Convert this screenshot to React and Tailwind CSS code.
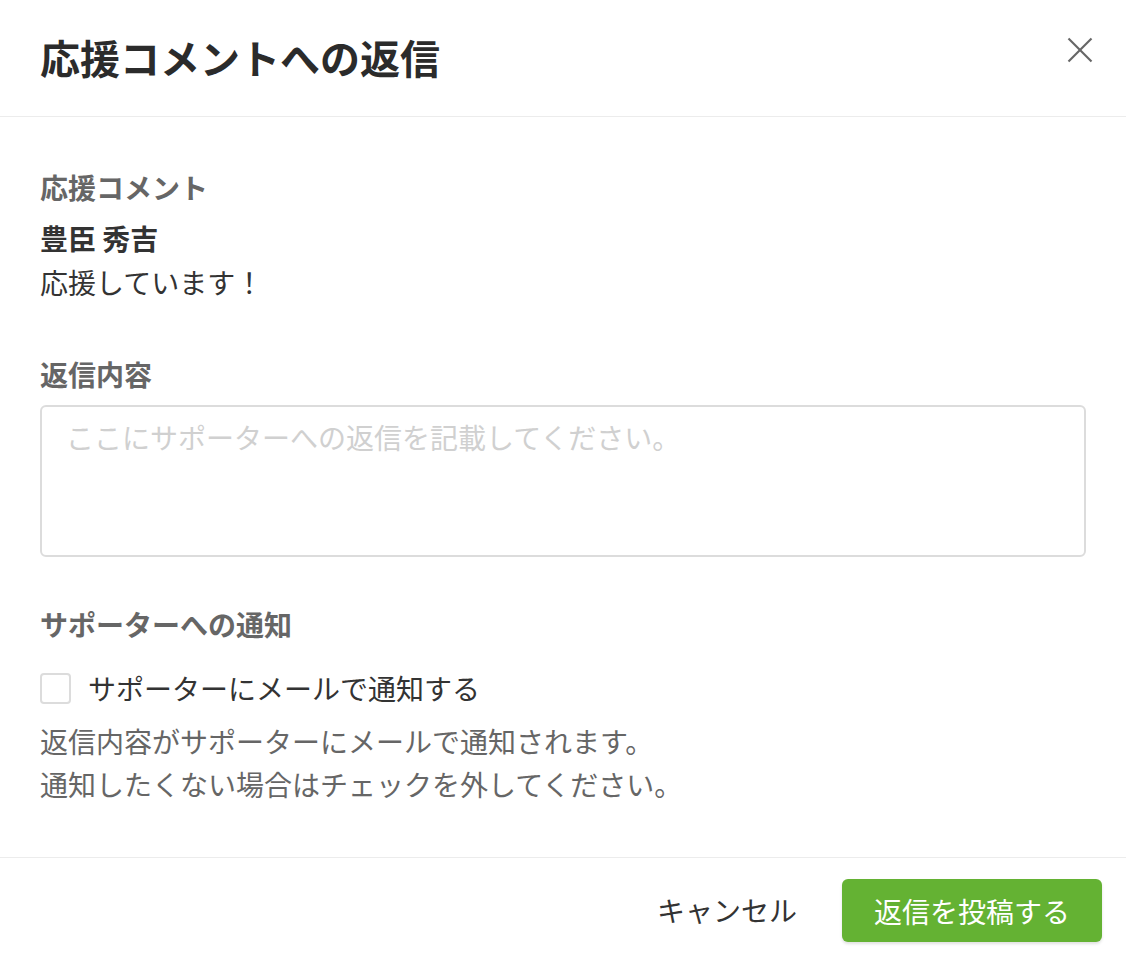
export default function App() {
  return (
    <div className="min-h-screen bg-white font-['Noto_Sans_CJK_JP','Noto_Sans',sans-serif] text-[#333]">
      {/* Header */}
      <div className="flex justify-between border-b border-[#ececec] pl-10 pr-[33px] h-[117px]">
        <h1 className="text-[40px] font-bold leading-[114px] text-[#2b2b2b]">応援コメントへの返信</h1>
        <button className="mt-[37px] self-start text-[#666]">
          <svg width="26" height="26" viewBox="0 0 26 26" fill="none" stroke="currentColor" strokeWidth="2.2">
            <line x1="1.5" y1="1.5" x2="24.5" y2="24.5" />
            <line x1="24.5" y1="1.5" x2="1.5" y2="24.5" />
          </svg>
        </button>
      </div>

      {/* Body */}
      <div className="px-10 pt-[50px] pb-[51px]">
        <p className="text-[28px] font-bold leading-[40px] text-[#666] mb-[9px]">応援コメント</p>
        <p className="text-[28px] font-bold leading-[44px]">豊臣 秀吉</p>
        <p className="text-[28px] leading-[44px]">応援しています！</p>

        <p className="mt-[50px] mb-[11px] text-[28px] font-bold leading-[40px] text-[#666]">返信内容</p>
        <textarea
          className="block w-full h-[152px] resize-none rounded-md border-2 border-[#dcdcdc] px-6 py-[10px] text-[28px] leading-[40px] outline-none placeholder:text-[#d0d0d0]"
          placeholder="ここにサポーターへの返信を記載してください。"
        />

        <p className="mt-[47px] mb-[22px] text-[28px] font-bold leading-[40px] text-[#666]">サポーターへの通知</p>
        <label className="flex items-center gap-[17px] h-[44px]">
          <span className="w-[31px] h-[31px] rounded-[4px] border-2 border-[#dcdcdc] bg-white" />
          <span className="text-[28px] leading-[44px]">サポーターにメールで通知する</span>
        </label>
        <div className="mt-[10px] text-[28px] leading-[43px] text-[#666]">
          <p>返信内容がサポーターにメールで通知されます。</p>
          <p>通知したくない場合はチェックを外してください。</p>
        </div>
      </div>

      {/* Footer */}
      <div className="flex items-center justify-end gap-[21px] border-t border-[#ececec] pt-[21px] pb-4 pr-[24px]">
        <button className="px-6 text-[28px] leading-[63px] text-[#333]">キャンセル</button>
        <button className="h-[63px] w-[260px] rounded-md bg-[#64b233] text-[28px] text-white shadow-[0_2px_3px_rgba(0,0,0,0.12)]">
          返信を投稿する
        </button>
      </div>
    </div>
  );
}
